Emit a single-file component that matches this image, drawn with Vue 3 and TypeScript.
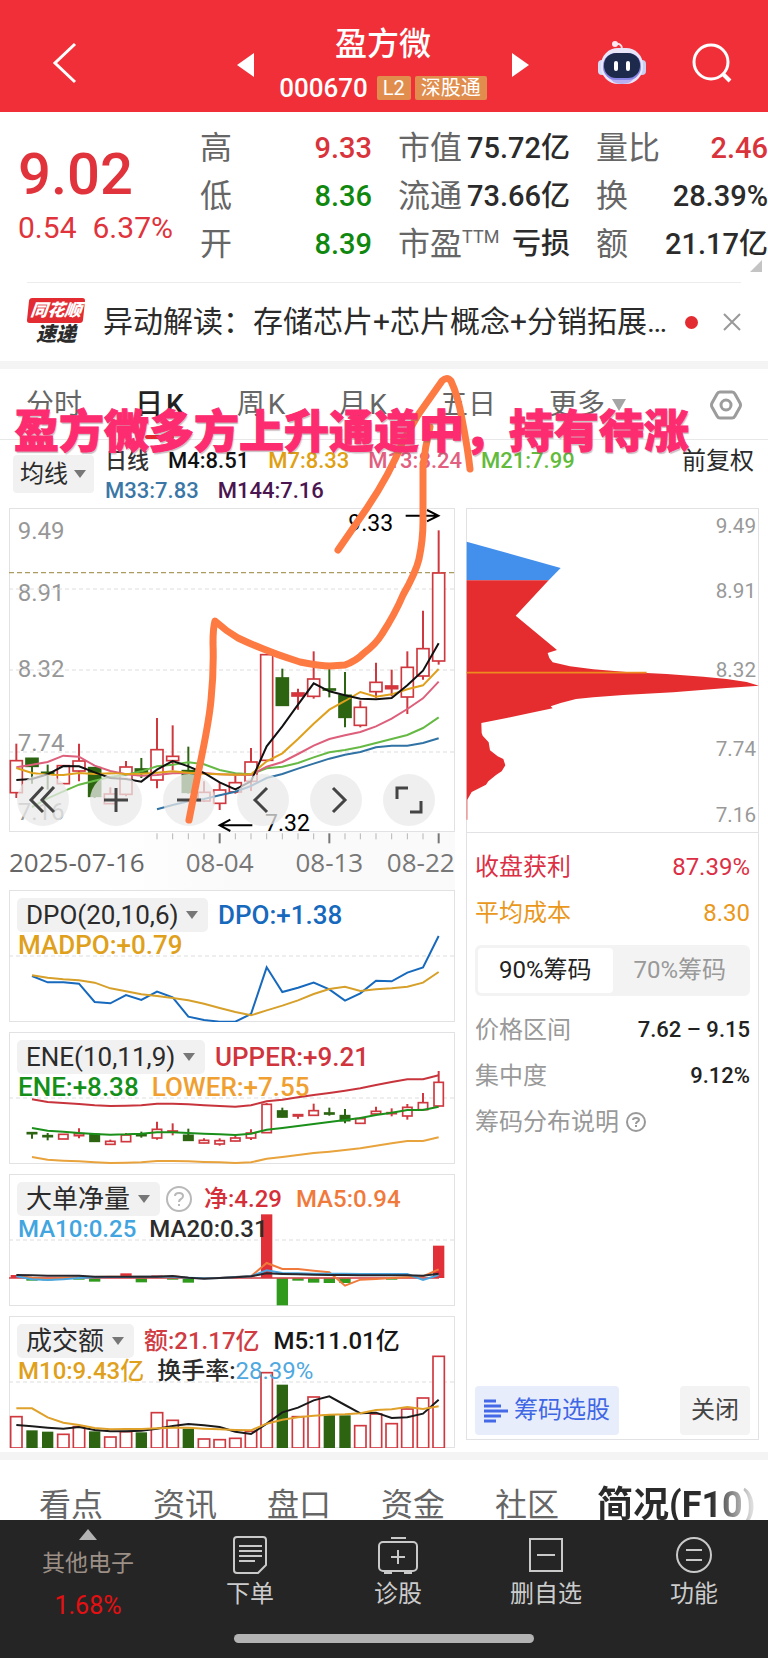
<script setup lang="ts">
import { ref } from 'vue'

type Kind = 'up' | 'down' | 'solid'
interface Candle { i: number; high: number; low: number; top: number; bottom: number; kind: Kind }
interface Bar { i: number; top: number; bottom: number; kind: Kind }

const STEP = 46.93
const cx = (i: number): number => Math.round(22 + i * STEP)
const pts = (start: number, ys: number[]): string => ys.map((y, n) => `${cx(start + n)},${y}`).join(' ')

const candle = (r: [number, number, number, number, number, Kind]): Candle => ({
  i: r[0], high: r[1], low: r[2], top: r[3], bottom: r[4], kind: r[5],
})
const bar = (r: [number, number, number, Kind]): Bar => ({ i: r[0], top: r[1], bottom: r[2], kind: r[3] })
const fillOf = (k: Kind): string => (k === 'up' ? '#ffffff' : k === 'down' ? '#2c6411' : '#e23038')
const strokeOf = (k: Kind): string => (k === 'down' ? '#2c6411' : '#d0383f')

const stats = [
  [
    { label: '高', value: '9.33', tone: 'red' },
    { label: '低', value: '8.36', tone: 'green' },
    { label: '开', value: '8.39', tone: 'green' },
  ],
  [
    { label: '市值', value: '75.72亿', tone: '' },
    { label: '流通', value: '73.66亿', tone: '' },
    { label: '市盈', sup: 'TTM', value: '亏损', tone: '' },
  ],
  [
    { label: '量比', value: '2.46', tone: 'red' },
    { label: '换', value: '28.39%', tone: '' },
    { label: '额', value: '21.17亿', tone: '' },
  ],
]

const periods = [['分时'], ['日', 'K'], ['周', 'K'], ['月', 'K'], ['五日']]
const activePeriod = ref(1)

const maRows = [
  [
    { text: '日线', color: '#333333' },
    { text: 'M4:8.51', color: '#111111' },
    { text: 'M7:8.33', color: '#e0a012' },
    { text: 'M13:8.24', color: '#e2607f' },
    { text: 'M21:7.99', color: '#62bb3c' },
  ],
  [
    { text: 'M33:7.83', color: '#3a77a6' },
    { text: 'M144:7.16', color: '#4b1650' },
  ],
]

const candles: Candle[] = ([
  [0, 432, 595, 483, 579, 'up'], [1, 475, 552, 476, 500, 'down'], [2, 495, 570, 518, 521, 'down'],
  [3, 497, 553, 498, 552, 'up'], [4, 432, 545, 484, 514, 'up'], [5, 503, 595, 504, 590, 'down'],
  [6, 563, 612, 583, 612, 'up'], [7, 484, 590, 502, 584, 'up'], [8, 475, 535, 508, 518, 'down'],
  [9, 355, 566, 450, 541, 'up'], [10, 377, 512, 470, 483, 'up'], [11, 441, 582, 513, 578, 'down'],
  [12, 545, 607, 578, 604, 'up'], [13, 548, 631, 571, 611, 'up'], [14, 525, 582, 549, 577, 'up'],
  [15, 445, 574, 487, 545, 'up'], [16, 164, 483, 165, 482, 'up'], [17, 207, 318, 235, 317, 'down'],
  [18, 267, 330, 280, 289, 'solid'], [19, 155, 297, 238, 290, 'up'], [20, 207, 293, 268, 271, 'down'],
  [21, 217, 383, 287, 353, 'down'], [22, 303, 383, 323, 377, 'up'], [23, 189, 295, 248, 276, 'up'],
  [24, 210, 290, 259, 267, 'solid'], [25, 155, 343, 203, 292, 'up'], [26, 33, 240, 147, 229, 'up'],
  [27, -208, 195, -80, 184, 'up'],
] as [number, number, number, number, number, Kind][]).map(candle)

const maLines = [
  { color: '#2f72a3', points: pts(9, [629, 616, 605, 598, 587, 576, 559, 535, 523, 507, 492, 477, 465, 457, 443, 438, 438, 430, 416]) },
  { color: '#66b945', points: pts(1, [622, 596, 575, 555, 543, 532, 525, 515, 500, 495, 488, 494, 511, 521, 524, 506, 501, 490, 473, 458, 451, 442, 430, 418, 406, 385, 353]) },
  { color: '#dd5f7b', points: pts(0, [503, 495, 487, 468, 471, 498, 514, 524, 528, 526, 521, 520, 520, 524, 525, 526, 501, 487, 463, 438, 418, 407, 397, 380, 357, 328, 296, 246]) },
  { color: '#dfa01c', points: pts(0, [505, 520, 525, 526, 520, 523, 521, 523, 522, 519, 515, 519, 522, 524, 525, 524, 485, 461, 418, 372, 330, 304, 277, 291, 284, 269, 257, 208]) },
  { color: '#111111', points: pts(0, [541, 538, 524, 499, 500, 518, 535, 538, 546, 510, 484, 500, 520, 548, 569, 545, 440, 380, 315, 251, 275, 287, 297, 299, 295, 257, 213, 131]) },
]

const priceLabels = [
  { text: '9.49', left: 92, right: 75 },
  { text: '8.91', left: 280, right: 271 },
  { text: '8.32', left: 506, right: 507 },
  { text: '7.74', left: 730, right: 743 },
  { text: '7.16', left: 936, right: 941 },
]

const ticks = Array.from({ length: 19 }, (_, n) => n + 9).map((i) => ({ i, major: i === 13 || i === 20 || i === 27 }))

const controls = [
  { name: '快退', d: 'M26 13 L14 26 L26 38 M37 13 L25 26 L37 38' },
  { name: '放大', d: 'M14 26 H38 M26 14 V38' },
  { name: '缩小', d: 'M14 26 H38' },
  { name: '向左', d: 'M30 14 L18 26 L30 38' },
  { name: '向右', d: 'M23 14 L35 26 L23 38' },
  { name: '全屏', d: 'M14 25 V14 H25 M38 27 V38 H27' },
]

const dpoLines = [
  { color: '#1669bd', points: pts(1, [258, 277, 277, 281, 336, 340, 315, 330, 305, 322, 380, 390, 395, 395, 372, 232, 306, 293, 278, 298, 332, 310, 272, 274, 248, 232, 138]) },
  { color: '#d6a02a', points: pts(1, [256, 263, 268, 271, 278, 295, 304, 313, 318, 324, 331, 341, 354, 366, 376, 361, 347, 331, 312, 297, 290, 303, 298, 295, 290, 278, 246]) },
]

const eneCandles: Candle[] = ([
  [1, 300, 320, 302, 305, 'down'], [2, 303, 325, 311, 314, 'down'], [3, 306, 321, 307, 321, 'up'],
  [4, 289, 319, 305, 311, 'up'], [5, 306, 329, 307, 328, 'down'], [6, 323, 338, 328, 337, 'up'],
  [7, 303, 330, 309, 329, 'up'], [8, 299, 317, 307, 311, 'down'], [9, 269, 323, 292, 318, 'up'],
  [10, 274, 310, 297, 299, 'up'], [11, 290, 326, 310, 325, 'down'], [12, 319, 334, 325, 333, 'up'],
  [13, 319, 341, 326, 336, 'up'], [14, 310, 328, 318, 327, 'up'], [15, 292, 324, 303, 318, 'up'],
  [16, 213, 303, 217, 302, 'up'], [17, 227, 256, 237, 255, 'down'], [18, 246, 260, 248, 252, 'up'],
  [19, 215, 251, 236, 250, 'up'], [20, 227, 251, 243, 246, 'down'], [21, 231, 274, 251, 266, 'down'],
  [22, 255, 275, 260, 274, 'up'], [23, 224, 250, 238, 246, 'up'], [24, 229, 253, 242, 245, 'up'],
  [25, 216, 263, 226, 252, 'up'], [26, 183, 234, 212, 233, 'up'], [27, 117, 224, 151, 222, 'up'],
] as [number, number, number, number, number, Kind][]).map(candle)

const eneLines = [
  { color: '#c8343c', points: pts(1, [202, 210, 213, 216, 220, 222, 221, 220, 215, 215, 217, 220, 222, 224, 220, 208, 203, 196, 189, 183, 176, 169, 159, 150, 142, 142, 130]) },
  { color: '#1a8f1a', points: pts(1, [288, 296, 299, 303, 306, 308, 307, 305, 301, 301, 303, 305, 307, 309, 305, 293, 288, 282, 276, 270, 264, 258, 249, 242, 234, 234, 224]) },
  { color: '#e8a33c', points: pts(1, [375, 383, 386, 388, 391, 393, 392, 391, 387, 387, 388, 390, 391, 393, 391, 380, 375, 369, 363, 359, 354, 349, 341, 334, 327, 327, 316]) },
]

const netBars: Bar[] = ([
  [0, 303, 312, 'solid'], [7, 298, 312, 'solid'], [9, 304, 312, 'solid'], [16, 121, 312, 'solid'], [27, 215, 312, 'solid'],
  [1, 313, 320, 'down'], [2, 313, 319, 'down'], [4, 313, 317, 'down'], [5, 313, 323, 'down'], [8, 313, 325, 'down'],
  [10, 313, 317, 'down'], [11, 313, 326, 'down'], [17, 313, 394, 'down'], [18, 313, 320, 'down'], [19, 313, 326, 'down'],
  [20, 313, 327, 'down'], [21, 313, 327, 'down'], [24, 313, 317, 'down'],
] as [number, number, number, Kind][]).map(bar)

const netLines = [
  { color: '#f07a3c', points: pts(0, [305, 311, 315, 312, 310, 309, 308, 308, 308, 308, 307, 311, 312, 312, 309, 307, 267, 285, 285, 290, 295, 335, 317, 315, 312, 310, 307, 286]) },
  { color: '#4aa6e0', points: pts(0, [307, 316, 318, 316, 312, 310, 309, 309, 308, 308, 308, 311, 313, 312, 309, 307, 289, 297, 298, 299, 299, 299, 300, 300, 300, 300, 318, 303]) },
  { color: '#26262c', points: pts(0, [303, 304, 305, 305, 305, 308, 308, 308, 308, 308, 306, 311, 314, 312, 310, 307, 298, 300, 301, 302, 303, 303, 304, 304, 304, 304, 305, 299]) },
]

const turnoverBars: Bar[] = ([
  [0, 302, 396, 'up'], [1, 343, 396, 'down'], [2, 347, 396, 'down'], [3, 355, 396, 'up'], [4, 332, 396, 'up'],
  [5, 346, 396, 'down'], [6, 363, 396, 'up'], [7, 347, 396, 'up'], [8, 349, 396, 'down'], [9, 290, 396, 'up'],
  [10, 313, 396, 'up'], [11, 338, 396, 'down'], [12, 369, 396, 'up'], [13, 371, 396, 'up'], [14, 367, 396, 'up'],
  [15, 346, 396, 'up'], [16, 170, 396, 'up'], [17, 206, 396, 'down'], [18, 302, 396, 'up'], [19, 243, 396, 'up'],
  [20, 296, 396, 'down'], [21, 298, 396, 'down'], [22, 329, 396, 'up'], [23, 294, 396, 'up'], [24, 323, 396, 'up'],
  [25, 279, 396, 'up'], [26, 246, 396, 'up'], [27, 121, 396, 'up'],
] as [number, number, number, Kind][]).map(bar)

const turnoverLines = [
  { color: '#1a1a1a', points: pts(0, [327, 331, 335, 338, 333, 342, 346, 346, 344, 338, 330, 324, 328, 333, 347, 354, 323, 289, 275, 253, 241, 267, 292, 290, 306, 304, 293, 251]) },
  { color: '#e0a12a', points: pts(0, [277, 277, 304, 320, 327, 336, 340, 339, 339, 337, 335, 335, 338, 340, 342, 343, 323, 311, 304, 299, 296, 295, 292, 282, 280, 273, 279, 271]) },
]

interface Legend { text: string; color: string; tail?: string; tailColor?: string }
interface Indicator {
  name: string; help: boolean; compact: boolean; row1: Legend[]; row2: Legend[]
  candles: Candle[]; bars: Bar[]; lines: { color: string; points: string }[]; axis: boolean
}

const indicators: Indicator[] = [
  {
    name: 'DPO(20,10,6)', help: false, compact: false, axis: false,
    row1: [{ text: 'DPO:+1.38', color: '#1669bd' }],
    row2: [{ text: 'MADPO:+0.79', color: '#dfa01c' }],
    candles: [], bars: [], lines: dpoLines,
  },
  {
    name: 'ENE(10,11,9)', help: false, compact: false, axis: false,
    row1: [{ text: 'UPPER:+9.21', color: '#d0343c' }],
    row2: [{ text: 'ENE:+8.38', color: '#14901a' }, { text: 'LOWER:+7.55', color: '#f0a030' }],
    candles: eneCandles, bars: [], lines: eneLines,
  },
  {
    name: '大单净量', help: true, compact: true, axis: true,
    row1: [{ text: '净:4.29', color: '#d5303a' }, { text: 'MA5:0.94', color: '#f07a3c' }],
    row2: [{ text: 'MA10:0.25', color: '#42a5e0' }, { text: 'MA20:0.31', color: '#2c2c2c' }],
    candles: [], bars: netBars, lines: netLines,
  },
  {
    name: '成交额', help: false, compact: true, axis: false,
    row1: [{ text: '额:21.17亿', color: '#cf3c42' }, { text: 'M5:11.01亿', color: '#161616' }],
    row2: [{ text: 'M10:9.43亿', color: '#dfa01c' }, { text: '换手率:', color: '#2c2c2c', tail: '28.39%', tailColor: '#4fa8e0' }],
    candles: [], bars: turnoverBars, lines: turnoverLines,
  },
]

const chipRange = ref(0)
const sections = ['看点', '资讯', '盘口', '资金', '社区']
</script>

<template>
  <div class="page">
    <header class="top">
      <button class="plain back" aria-label="返回">
        <svg width="26" height="44" viewBox="0 0 26 44"><path d="M23 3 L3 22 L23 41" fill="none" stroke="#fff" stroke-width="3" /></svg>
      </button>
      <div class="title-area">
        <button class="plain" aria-label="上一只">
          <svg width="18" height="24" viewBox="0 0 18 24"><path d="M17 0 V24 L0 12Z" fill="#fff" /></svg>
        </button>
        <div class="title">
          <h1>盈方微</h1>
          <div class="code"><span>000670</span><b>L2</b><b>深股通</b></div>
        </div>
        <button class="plain" aria-label="下一只">
          <svg width="18" height="24" viewBox="0 0 18 24"><path d="M1 0 V24 L18 12Z" fill="#fff" /></svg>
        </button>
      </div>
      <div class="tools">
        <button class="plain" aria-label="智能助手">
          <svg width="48" height="46" viewBox="0 0 48 46">
            <path d="M17 4 Q24 3 24 9" fill="none" stroke="#f6dfe8" stroke-width="2" />
            <circle cx="17" cy="4" r="3" fill="#fbeaf2" />
            <rect x="0" y="20" width="9" height="15" rx="4" fill="#d5dcf6" />
            <rect x="39" y="20" width="9" height="15" rx="4" fill="#c7d0f0" />
            <rect x="3" y="8" width="42" height="36" rx="17" fill="#e9e6fa" />
            <path d="M8 34 Q24 45 40 34 Q34 44 24 44 Q14 44 8 34Z" fill="#b9aef0" />
            <rect x="5" y="13" width="38" height="27" rx="13" fill="#8a86e6" />
            <rect x="6" y="13" width="36" height="25" rx="12" fill="#1d2a4c" />
            <rect x="16" y="21" width="4" height="10" rx="2" fill="#fff" />
            <rect x="28" y="21" width="4" height="10" rx="2" fill="#fff" />
          </svg>
        </button>
        <button class="plain" aria-label="搜索">
          <svg width="40" height="40" viewBox="0 0 40 40" fill="none" stroke="#fff" stroke-width="3">
            <circle cx="19" cy="19" r="17" /><path d="M31 31 L38 38" stroke-width="4" />
          </svg>
        </button>
      </div>
    </header>

    <section class="quote">
      <div class="price">
        <strong>9.02</strong>
        <div class="delta"><span>0.54</span><span>6.37%</span></div>
      </div>
      <dl v-for="(col, c) in stats" :key="c">
        <div v-for="s in col" :key="s.label">
          <dt>{{ s.label }}<sup v-if="'sup' in s">{{ s.sup }}</sup></dt>
          <dd :class="s.tone">{{ s.value }}</dd>
        </div>
      </dl>
      <svg class="corner" width="12" height="12" viewBox="0 0 12 12"><path d="M12 0 V12 H0Z" fill="#c4c4c4" /></svg>
    </section>

    <section class="news">
      <div class="brand">
        <span class="brand-top">同花顺</span>
        <span class="brand-bottom">速递</span>
      </div>
      <a href="#news">异动解读：存储芯片+芯片概念+分销拓展…</a>
      <i class="dot"></i>
      <button class="plain" aria-label="关闭">
        <svg width="18" height="18" viewBox="0 0 18 18"><path d="M1 1 L17 17 M17 1 L1 17" stroke="#999" stroke-width="2" /></svg>
      </button>
    </section>

    <section class="market">
      <nav class="periods">
        <button
          v-for="(p, i) in periods" :key="i" class="plain period" :class="{ active: activePeriod === i }"
          @click="activePeriod = i"
        ><span v-for="part in p" :key="part">{{ part }}</span></button>
        <label class="pick more">
          <select aria-label="更多周期"><option>更多</option></select>
          <svg width="14" height="12" viewBox="0 0 14 12"><path d="M0 0 H14 L7 12Z" fill="#a5a5a5" /></svg>
        </label>
        <button class="plain settings" aria-label="设置">
          <svg width="32" height="30" viewBox="0 0 32 30" fill="none" stroke="#9c9c9c" stroke-width="3">
            <path d="M10 2 H22 Q24 2 25 4 L30 13 Q31 15 30 17 L25 26 Q24 28 22 28 H10 Q8 28 7 26 L2 17 Q1 15 2 13 L7 4 Q8 2 10 2Z" />
            <circle cx="16" cy="15" r="5" />
          </svg>
        </button>
      </nav>

      <div class="averages">
        <label class="pick average">
          <select aria-label="主图指标"><option>均线</option></select>
          <svg width="12" height="8" viewBox="0 0 12 8"><path d="M0 0 H12 L6 8Z" fill="#777" /></svg>
        </label>
        <div class="ma">
          <div v-for="(row, r) in maRows" :key="r">
            <span v-for="m in row" :key="m.text" :style="{ color: m.color }">{{ m.text }}</span>
          </div>
        </div>
        <button class="plain adjust">前复权</button>
      </div>

      <div class="boards">
        <div class="left">
          <div class="kline box">
            <svg viewBox="0 0 1338 972" aria-label="日K走势">
              <g fill="#979797" font-size="72">
                <text v-for="p in priceLabels" :key="p.text" x="26" :y="p.left">{{ p.text }}</text>
              </g>
              <g stroke="#dddddd" stroke-width="3" stroke-dasharray="12 9">
                <path d="M0 243 H1338 M0 486 H1338 M0 732 H1338" />
                <path d="M0 194 H1338" stroke="#ab9a62" stroke-width="4" stroke-dasharray="15 9" />
              </g>
              <g transform="translate(0 275)">
                <g v-for="k in candles" :key="k.i" :stroke="strokeOf(k.kind)" stroke-width="6">
                  <line :x1="cx(k.i)" :x2="cx(k.i)" :y1="k.high" :y2="k.low" />
                  <rect :x="cx(k.i) - 18" :y="k.top" width="36" :height="k.bottom - k.top" :fill="fillOf(k.kind)" stroke-width="5" />
                </g>
                <polyline v-for="l in maLines" :key="l.color" :points="l.points" :stroke="l.color" fill="none" stroke-width="6" />
                <path d="M730 677 H634 M664 660 L632 677 L664 694" fill="none" stroke="#000" stroke-width="6" />
              </g>
              <path d="M1190 23 H1286 M1254 6 L1288 23 L1254 40" fill="none" stroke="#000" stroke-width="6" />
              <g fill="#000" font-size="69"><text x="1018" y="68">9.33</text><text x="768" y="968">7.32</text></g>
            </svg>
            <div class="controls">
              <button v-for="b in controls" :key="b.name" :aria-label="b.name">
                <svg width="52" height="52" viewBox="0 0 52 52"><path :d="b.d" fill="none" stroke="#444" stroke-width="3" /></svg>
              </button>
            </div>
          </div>
          <svg class="dates" viewBox="0 0 1338 174" aria-label="日期">
            <g v-for="t in ticks" :key="t.i">
              <line :x1="cx(t.i)" :x2="cx(t.i)" y1="4" :y2="t.major ? 34 : 22" :stroke="t.major ? '#777' : '#b5b5b5'" :stroke-width="t.major ? 6 : 3" />
            </g>
            <g font-size="78" fill="#777">
              <text x="0" y="119" fill="#666">2025-07-16</text>
              <text x="632" y="119" text-anchor="middle">08-04</text>
              <text x="961" y="119" text-anchor="middle">08-13</text>
              <text x="1337" y="119" text-anchor="end">08-22</text>
            </g>
          </svg>

          <div class="indicators">
            <div v-for="ind in indicators" :key="ind.name" class="indicator box">
              <svg class="plot" viewBox="0 0 1338 396" :aria-label="ind.name">
                <path d="M0 198 H1338" stroke="#dddddd" stroke-width="3" stroke-dasharray="12 9" />
                <g v-for="k in ind.candles" :key="'c' + k.i" :stroke="strokeOf(k.kind)" stroke-width="6">
                  <line :x1="cx(k.i)" :x2="cx(k.i)" :y1="k.high" :y2="k.low" />
                  <rect :x="cx(k.i) - 14" :y="k.top" width="28" :height="k.bottom - k.top" :fill="fillOf(k.kind)" stroke-width="5" />
                </g>
                <rect
                  v-for="b in ind.bars" :key="'b' + b.i" :x="cx(b.i) - 17" :y="b.top" width="34" :height="b.bottom - b.top"
                  :fill="ind.axis && b.kind === 'down' ? '#2f9a1c' : fillOf(b.kind)" :stroke="b.kind === 'up' ? '#d0383f' : 'none'" stroke-width="5"
                />
                <path v-if="ind.axis" d="M0 312 H1290" stroke="#d23a40" stroke-width="4" />
                <polyline v-for="l in ind.lines" :key="l.color" :points="l.points" :stroke="l.color" fill="none" stroke-width="6" />
              </svg>
              <div class="legend" :class="{ compact: ind.compact }">
                <div class="row one">
                  <label class="pick chip">
                    <select :aria-label="ind.name"><option>{{ ind.name }}</option></select>
                    <svg width="12" height="8" viewBox="0 0 12 8"><path d="M0 0 H12 L6 8Z" fill="#777" /></svg>
                  </label>
                  <button v-if="ind.help" class="plain help" aria-label="指标说明">
                    <svg width="26" height="26" viewBox="0 0 26 26" fill="none" stroke="#b9b9b9" stroke-width="2">
                      <circle cx="13" cy="13" r="12" /><path d="M9 10 Q9 7 13 7 Q17 7 17 10 Q17 12 15 13 Q13 14 13 16 M13 18 V20" />
                    </svg>
                  </button>
                  <span v-for="t in ind.row1" :key="t.text" :style="{ color: t.color }">{{ t.text }}</span>
                </div>
                <div class="row">
                  <span v-for="t in ind.row2" :key="t.text" :style="{ color: t.color }">{{ t.text }}<em v-if="t.tail" :style="{ color: t.tailColor }">{{ t.tail }}</em></span>
                </div>
              </div>
            </div>
          </div>
        </div>

        <aside class="right box">
          <svg class="dist" viewBox="0 0 879 972" aria-label="筹码分布">
            <path d="M2 101 L284 180 L248 217 H2Z" fill="#438fec" />
            <path
              d="M2 217 H248 L149 323 L273 426 L245 435 L250 450 L260 463 L312 475 L382 484 L482 492 L602 498 L712 506 L782 513 L842 522 L879 533 L782 540 L622 553 L472 561 L382 568 L330 573 L284 585 L254 595 L260 601 L182 617 L122 630 L46 645 L47 675 L50 683 L68 703 L72 727 L95 745 L112 753 L118 772 L107 790 L90 801 L67 820 L60 830 L17 852 L4 875 V935 H2Z"
              fill="#e52d2f"
            />
            <path d="M2 494 H542" stroke="#ee8a1e" stroke-width="5" />
            <g fill="#999999" font-size="62" text-anchor="end">
              <text v-for="p in priceLabels" :key="p.text" x="870" :y="p.right">{{ p.text }}</text>
            </g>
          </svg>
          <div class="info">
            <div class="line profit"><span>收盘获利</span><span>87.39%</span></div>
            <div class="line cost"><span>平均成本</span><span>8.30</span></div>
            <div class="segments">
              <button v-for="(n, i) in ['90%筹码', '70%筹码']" :key="n" :class="{ on: chipRange === i }" @click="chipRange = i">{{ n }}</button>
            </div>
            <div class="line"><span>价格区间</span><b>7.62 – 9.15</b></div>
            <div class="line"><span>集中度</span><b>9.12%</b></div>
            <a class="line explain" href="#chips">筹码分布说明
              <svg width="20" height="20" viewBox="0 0 20 20" fill="none" stroke="#999" stroke-width="2">
                <circle cx="10" cy="10" r="9" /><path d="M7 8 Q7 6 10 6 Q13 6 13 8 Q13 9 11 10 Q10 11 10 12 M10 13 V15" />
              </svg>
            </a>
          </div>
          <div class="actions">
            <button class="choose">
              <svg width="24" height="24" viewBox="0 0 24 24" stroke="#4468e6" stroke-width="3"><path d="M0 2 H12 M0 7 H17 M0 12 H24 M0 17 H17 M0 22 H12" /></svg>
              筹码选股
            </button>
            <button class="close">关闭</button>
          </div>
        </aside>
      </div>

      <svg class="sketch" viewBox="0 0 768 460" aria-hidden="true">
        <g transform="translate(0 -369)" fill="none" stroke="#fd7a43" stroke-width="7" stroke-linecap="round" stroke-linejoin="round">
          <path d="M189 820 L199 769 Q209 722 211 700 Q214 670 213 643 Q213 628 215 621 Q226 631 238 638 Q270 653 300 662 Q320 666 330 666 L345 665 Q356 661 364 653 Q376 644 382 634 Q395 614 403 595 Q416 572 419 559 Q423 540 423 522 V467 Q425 447 430 427" />
          <path d="M338 550 L367 508 Q390 474 403 441 L418 415 L442 381 Q447 376 451 381 Q458 396 462 419 Q468 450 470 469" />
        </g>
      </svg>
      <p class="caption">盈方微多方上升通道中，持有待涨</p>
    </section>

    <nav class="sections">
      <a v-for="s in sections" :key="s" :href="'#' + s">{{ s }}</a>
      <a class="current" href="#f10">简况(F10)</a>
    </nav>

    <footer>
      <div class="bar">
        <button class="plain sector">
          <svg width="18" height="11" viewBox="0 0 18 11"><path d="M9 0 L18 11 H0Z" fill="#b3b3b3" /></svg>
          <span>其他电子</span>
          <b>1.68%</b>
        </button>
        <button class="plain action">
          <svg width="40" height="40" viewBox="0 0 40 40" fill="none" stroke="#c9c9c9" stroke-width="2">
            <path d="M7 2 H33 Q36 2 36 5 V30 L28 38 H7 Q4 38 4 35 V5 Q4 2 7 2Z" stroke-linejoin="round" />
            <path d="M9 11 H32 M9 16 H32 M9 21 H32 M9 26 H25" />
          </svg>下单
        </button>
        <button class="plain action">
          <svg width="40" height="40" viewBox="0 0 40 40" fill="none" stroke="#c9c9c9" stroke-width="2">
            <rect x="1" y="7" width="38" height="29" rx="4" /><path d="M13 3 H28 M6 38 H14 M26 38 H34 M20 15 V29 M13 22 H27" />
          </svg>诊股
        </button>
        <button class="plain action">
          <svg width="40" height="40" viewBox="0 0 40 40" fill="none" stroke="#c9c9c9" stroke-width="2">
            <rect x="4" y="4" width="32" height="32" /><path d="M11 20 H29" />
          </svg>删自选
        </button>
        <button class="plain action">
          <svg width="40" height="40" viewBox="0 0 40 40" fill="none" stroke="#c9c9c9" stroke-width="2">
            <circle cx="20" cy="20" r="17" /><path d="M12 15 H28 M12 25 H28" />
          </svg>功能
        </button>
      </div>
      <div class="home"></div>
    </footer>
  </div>
</template>

<style>
body { margin: 0; background: #fff; }
</style>

<style scoped>
* { box-sizing: border-box; }
.page { font-family: Roboto, "Noto Sans CJK SC", sans-serif; color: #2b2b2b; background: #fff; overflow: hidden; }
button, select { font: inherit; color: inherit; border: 0; margin: 0; }
.plain { background: none; padding: 0; }
svg { display: block; }
a { color: inherit; text-decoration: none; }

.top { height: 112px; background: #f12f38; color: #fff; display: grid; grid-template-columns: 1fr auto 1fr; align-items: start; padding: 22px 36px 0 52px; }
.back { width: 26px; margin-top: 19px; }
.title-area { display: flex; gap: 24px; align-items: flex-start; margin-right: 18px; }
.title-area > button { margin-top: 31px; }
.title { display: flex; flex-direction: column; align-items: center; }
h1 { margin: 0; font-size: 32px; line-height: 44px; font-weight: 500; }
.code { display: flex; align-items: center; gap: 4px; font-size: 26px; line-height: 28px; margin-top: 8px; font-weight: 500; }
.code span { margin-right: 5px; }
.code b { font-size: 20px; line-height: 24px; font-weight: 400; padding: 0 6px; background: #e08d4d; border-radius: 2px; }
.tools { display: flex; gap: 46px; justify-content: flex-end; align-items: center; margin-top: 18px; }

.quote { position: relative; display: grid; grid-template-columns: 156fr 172fr 172fr 172fr; column-gap: 26px; padding: 12px 0 14px 18px; }
.price { color: #e0333b; padding-top: 18px; }
.price strong { display: block; font-size: 58px; line-height: 64px; font-weight: 500; }
.delta { display: flex; gap: 16px; font-size: 30px; line-height: 44px; white-space: nowrap; }
dl { margin: 0; }
dl > div { display: flex; justify-content: space-between; font-size: 29px; line-height: 48px; white-space: nowrap; }
dt { font-size: 32px; color: #666; }
dt sup { font-size: 18px; line-height: 18px; }
dd { margin: 0; font-weight: 500; }
.red { color: #d9333b; }
.green { color: #10880f; }
.corner { position: absolute; right: 6px; bottom: 10px; }

.news { display: flex; align-items: center; margin: 0 27px; height: 79px; border-top: 1px solid #ededed; }
.brand { width: 58px; height: 48px; display: flex; flex-direction: column; align-items: center; font-style: italic; font-weight: 900; }
.brand-top { width: 56px; background: #e32c31; color: #fff; border-radius: 3px; font-size: 17px; line-height: 25px; text-align: center; transform: skewX(-6deg); }
.brand-bottom { font-size: 20px; line-height: 23px; }
.news a { font-size: 30px; line-height: 44px; margin-left: 18px; flex: 1; white-space: nowrap; }
.dot { width: 13px; height: 13px; border-radius: 50%; background: #e32c31; margin-right: 25px; }

.market { position: relative; border-top: 8px solid #f4f4f4; border-bottom: 8px solid #f4f4f4; padding-bottom: 4px; }
.periods { display: flex; align-items: center; gap: 53px; height: 71px; padding: 1px 26px 0 26px; border-bottom: 1px solid #e8e8e8; font-size: 28px; line-height: 40px; color: #666; }
.period { display: flex; gap: 3px; position: relative; }
.active { color: #222; font-weight: 500; }
.active::after { content: ""; position: absolute; left: 10px; right: 10px; bottom: -14px; height: 4px; border-radius: 2px; background: #e3292f; }
.settings { margin-left: auto; }
.pick { display: inline-grid; align-items: center; }
.pick select, .pick svg { grid-area: 1 / 1; }
.pick svg { justify-self: end; pointer-events: none; }
.pick select { appearance: none; background: none; padding: 0; }
.more select { padding-right: 20px; }

.averages { display: flex; padding: 6px 14px 2px 13px; }
.average select { font-size: 24px; line-height: 38px; padding: 0 26px 0 7px; background: #f1f1f1; border-radius: 4px; }
.average svg { margin-right: 8px; }
.average { align-self: flex-start; margin-top: 9px; }
.ma { flex: 1; padding-left: 11px; font-size: 22px; line-height: 30px; font-weight: 500; white-space: nowrap; }
.ma > div { display: flex; gap: 19px; }
.adjust { align-self: flex-start; font-size: 24px; line-height: 30px; }

.boards { display: grid; grid-template-columns: 446fr 293fr; column-gap: 11px; padding: 0 9px; }
.box { box-shadow: inset 0 0 0 1px #e2e2e4; }
.kline { position: relative; }
.kline > svg, .dates, .dist { width: 100%; }
.dates { font-family: "Open Sans", sans-serif; background: linear-gradient(90deg, #fff 20%, #fafafa 50%); }
.controls { position: absolute; left: 8px; right: 20px; bottom: 6px; display: flex; justify-content: space-between; }
.controls button { padding: 0; border-radius: 50%; background: rgba(233, 233, 233, 0.75); }
.indicators { display: grid; gap: 10px; }
.indicator { display: grid; }
.plot, .legend { grid-area: 1 / 1; width: 100%; }
.legend { padding: 9px 0 0 8px; font-size: 26px; line-height: 28px; font-weight: 500; white-space: nowrap; }
.row { display: flex; align-items: center; gap: 13px; padding-left: 1px; }
.row.one { height: 32px; padding-left: 0; gap: 10px; }
.row.one span + span { margin-left: 4px; }
.row em { font-style: normal; font-weight: 400; }
.compact { font-size: 24px; }
.help { margin-left: -4px; margin-right: 2px; }
.chip select { font-size: 26px; line-height: 34px; font-weight: 400; padding: 0 29px 0 9px; background: #f1f1f1; border-radius: 5px; }
.chip svg { margin-right: 10px; }

.right { display: flex; flex-direction: column; margin-bottom: 8px; }
.dist { border-bottom: 1px solid #e2e2e4; }
.info { padding: 11px 9px 0; font-size: 24px; }
.line { display: flex; justify-content: space-between; line-height: 46px; color: #999; }
.line b { font-size: 22px; font-weight: 500; color: #222; }
.line.profit { color: #dc2f45; }
.line.cost { color: #ea981c; }
.segments { display: flex; margin: 9px 0 11px; padding: 3px; background: #f3f3f3; border-radius: 6px; }
.segments button { flex: 1; padding: 0; line-height: 45px; background: none; color: #999; white-space: nowrap; border-radius: 4px; }
.segments .on { background: #fff; color: #222; }
.explain { justify-content: flex-start; align-items: center; gap: 7px; }
.actions { display: flex; justify-content: space-between; margin-top: auto; padding: 0 9px 5px; }
.actions button { font-size: 24px; line-height: 49px; border-radius: 4px; padding: 0 9px; }
.choose { display: flex; align-items: center; gap: 6px; background: #e8edfc; color: #3f66e4; }
.actions .close { background: #f3f3f3; color: #444; padding: 0 11px; }

.sketch { position: absolute; top: 0; left: 0; width: 100%; pointer-events: none; }
.caption { position: absolute; top: 36px; left: 14px; margin: 0; font-size: 45px; line-height: 56px; font-weight: 900; color: #fd2b70; -webkit-text-stroke: 1px #fd2b70; white-space: nowrap; text-shadow: 1px 2px 1px rgba(120, 90, 100, 0.4); pointer-events: none; }

.sections { display: flex; gap: 50px; height: 60px; padding: 21px 0 0 39px; font-size: 32px; line-height: 48px; color: #666; white-space: nowrap; overflow: hidden; }
.sections .current { font-size: 36px; font-weight: 700; margin-left: -12px; color: transparent; background: linear-gradient(90deg, #2b2b2b 72%, #ddd 98%); background-clip: text; }

footer { background: #252525; color: #ccc; padding-bottom: 15px; }
.bar { display: grid; grid-template-columns: 176fr 148fr 148fr 148fr 148fr; height: 114px; }
.sector, .action { display: flex; flex-direction: column; align-items: center; font-size: 24px; }
.sector { padding-top: 9px; color: #9b8f86; }
.sector span { font-size: 23px; line-height: 32px; margin-top: 8px; }
.sector b { font-weight: 400; font-size: 25px; line-height: 32px; margin-top: 10px; color: #e60f12; }
.action { padding-top: 15px; line-height: 32px; gap: 3px; }
.home { width: 39%; height: 9px; border-radius: 5px; background: #b3b3b3; margin: 0 auto; }
</style>
